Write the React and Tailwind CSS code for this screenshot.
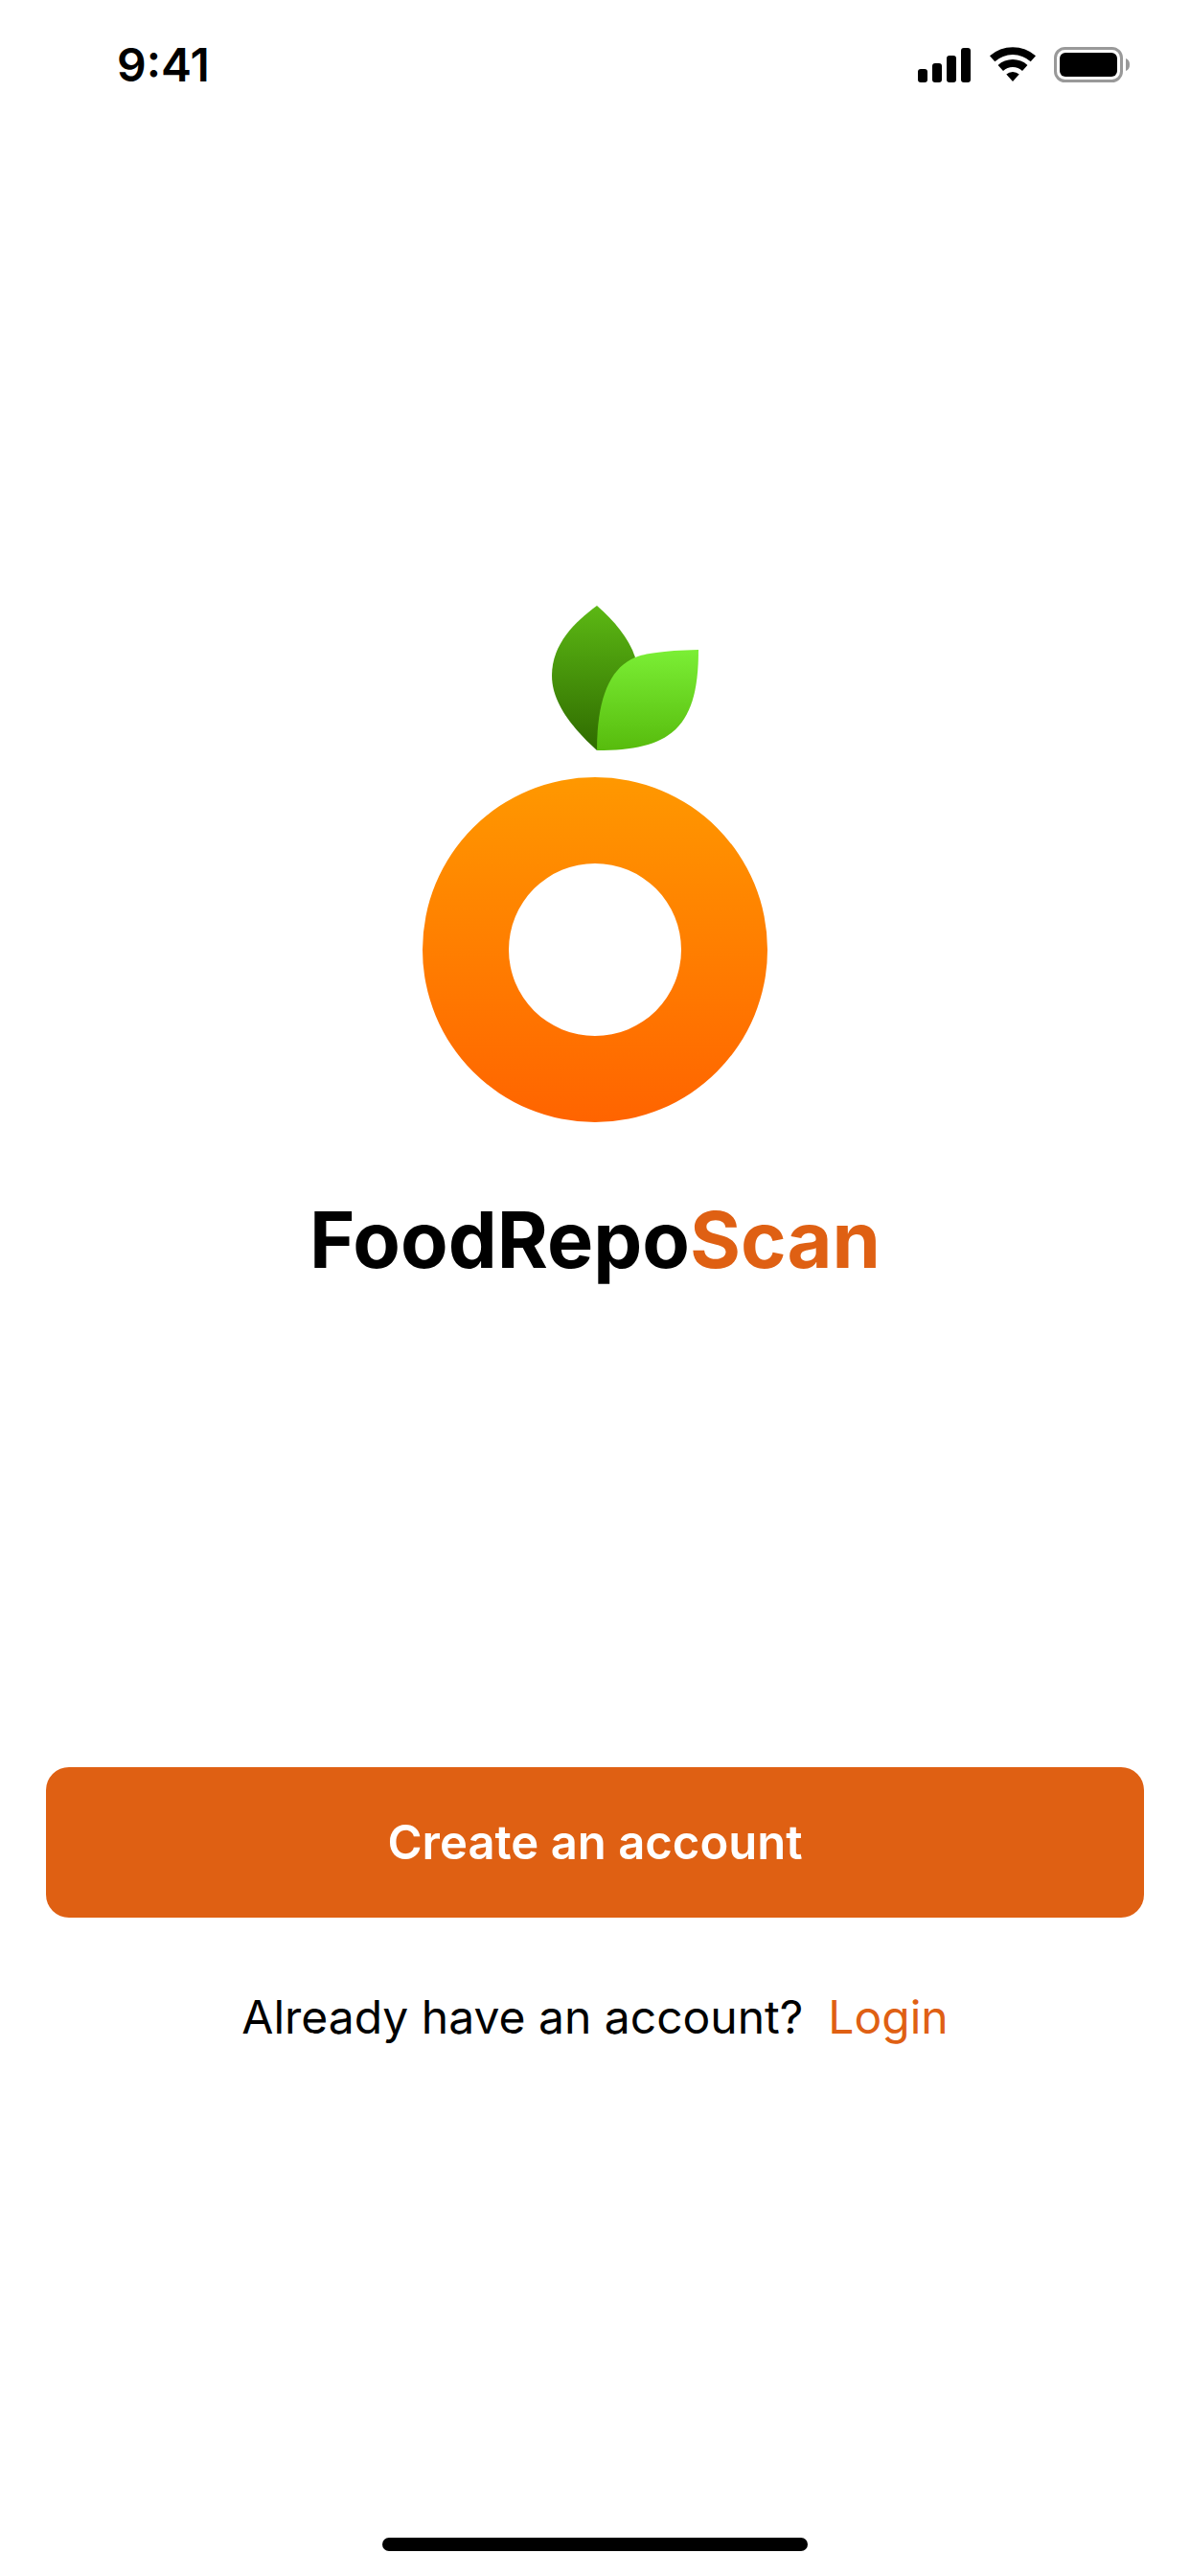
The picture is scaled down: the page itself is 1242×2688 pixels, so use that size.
const orange = '#df6013';

function StatusBar() {
  return (
    <div className="flex items-start justify-between h-[49px] mt-[49px] pl-[122px] pr-[62px]">
      <span className="text-[48px] leading-[38px] font-semibold text-black">9:41</span>
      <div className="flex items-start">
        <svg width="55" height="36" viewBox="0 0 55 36" className="mr-[20px] mt-[1px]">
          <rect x="0" y="22" width="10" height="14" rx="3" fill="#000" />
          <rect x="15" y="16" width="10" height="20" rx="3" fill="#000" />
          <rect x="30" y="8" width="10" height="28" rx="3" fill="#000" />
          <rect x="45" y="0" width="10" height="36" rx="3" fill="#000" />
        </svg>
        <svg width="48" height="36" viewBox="0 0 48 36" className="mr-[19px]">
          <path d="M0 9.3A36 36 0 0 1 48 9.3L42.7 15.2A28 28 0 0 0 5.3 15.2Z" fill="#000" />
          <path d="M8.6 18.9A23 23 0 0 1 39.4 18.9L34 24.9A15 15 0 0 0 14 24.9Z" fill="#000" />
          <path d="M17.3 28.6A10 10 0 0 1 30.7 28.6L24 36Z" fill="#000" />
        </svg>
        <svg width="80" height="37" viewBox="0 0 80 37">
          <rect x="1.5" y="1.5" width="69" height="34" rx="10" fill="none" stroke="#999" strokeWidth="3" />
          <rect x="6" y="6" width="60" height="25" rx="6" fill="#000" />
          <path d="M75 12C78 13 79 15.500 79 18.500C79 21.500 78 24 75 25Z" fill="#999" />
        </svg>
      </div>
    </div>
  );
}

function Logo() {
  return (
    <svg width="362" height="540" viewBox="440 632 362 540" className="block">
      <defs>
        <linearGradient id="darkLeaf" x1="0" y1="0" x2="0" y2="1">
          <stop offset="0" stopColor="#5cb814" />
          <stop offset="1" stopColor="#2f6b00" />
        </linearGradient>
        <linearGradient id="lightLeaf" x1="0" y1="0" x2="0" y2="1">
          <stop offset="0" stopColor="#7bef35" />
          <stop offset="1" stopColor="#57bb0d" />
        </linearGradient>
        <linearGradient id="fruit" x1="0" y1="0" x2="0" y2="1">
          <stop offset="0" stopColor="#ff9800" />
          <stop offset="1" stopColor="#ff6400" />
        </linearGradient>
      </defs>
      <path d="M623 632C600 649 576 672 576 705C576 735 600 762 623 783L663 686C656 665 641 648 623 632Z" fill="url(#darkLeaf)" />
      <path d="M729 678C690 679 673 682 663 686C636 697 623 730 623 783C700 783 729 760 729 678Z" fill="url(#lightLeaf)" />
      <path fillRule="evenodd" d="M621 811A180 180 0 1 1 621 1171A180 180 0 1 1 621 811ZM621 901A90 90 0 1 0 621 1081A90 90 0 1 0 621 901Z" fill="url(#fruit)" />
    </svg>
  );
}

export default function App() {
  return (
    <div className="relative flex flex-col h-[2688px] bg-white font-['Inter',sans-serif] overflow-hidden">
      <StatusBar />
      <main className="flex flex-col items-center pt-[534px]">
        <Logo />
        <h1 className="mt-[72px] text-[81px] leading-[100px] font-bold text-black">
          FoodRepo<span style={{ color: orange }}>Scan</span>
        </h1>
        <button className="mt-[500px] w-[1146px] h-[157px] rounded-[24px] bg-[#df6013] text-white text-[49px] font-semibold">
          Create an account
        </button>
        <p className="mt-[69px] text-[48px] leading-[70px] text-black">
          Already have an account?
          <span className="ml-[26px] text-[#df6013]">Login</span>
        </p>
      </main>
      <div className="mt-auto mb-[26px] self-center w-[444px] h-[14px] rounded-full bg-black" />
    </div>
  );
}
